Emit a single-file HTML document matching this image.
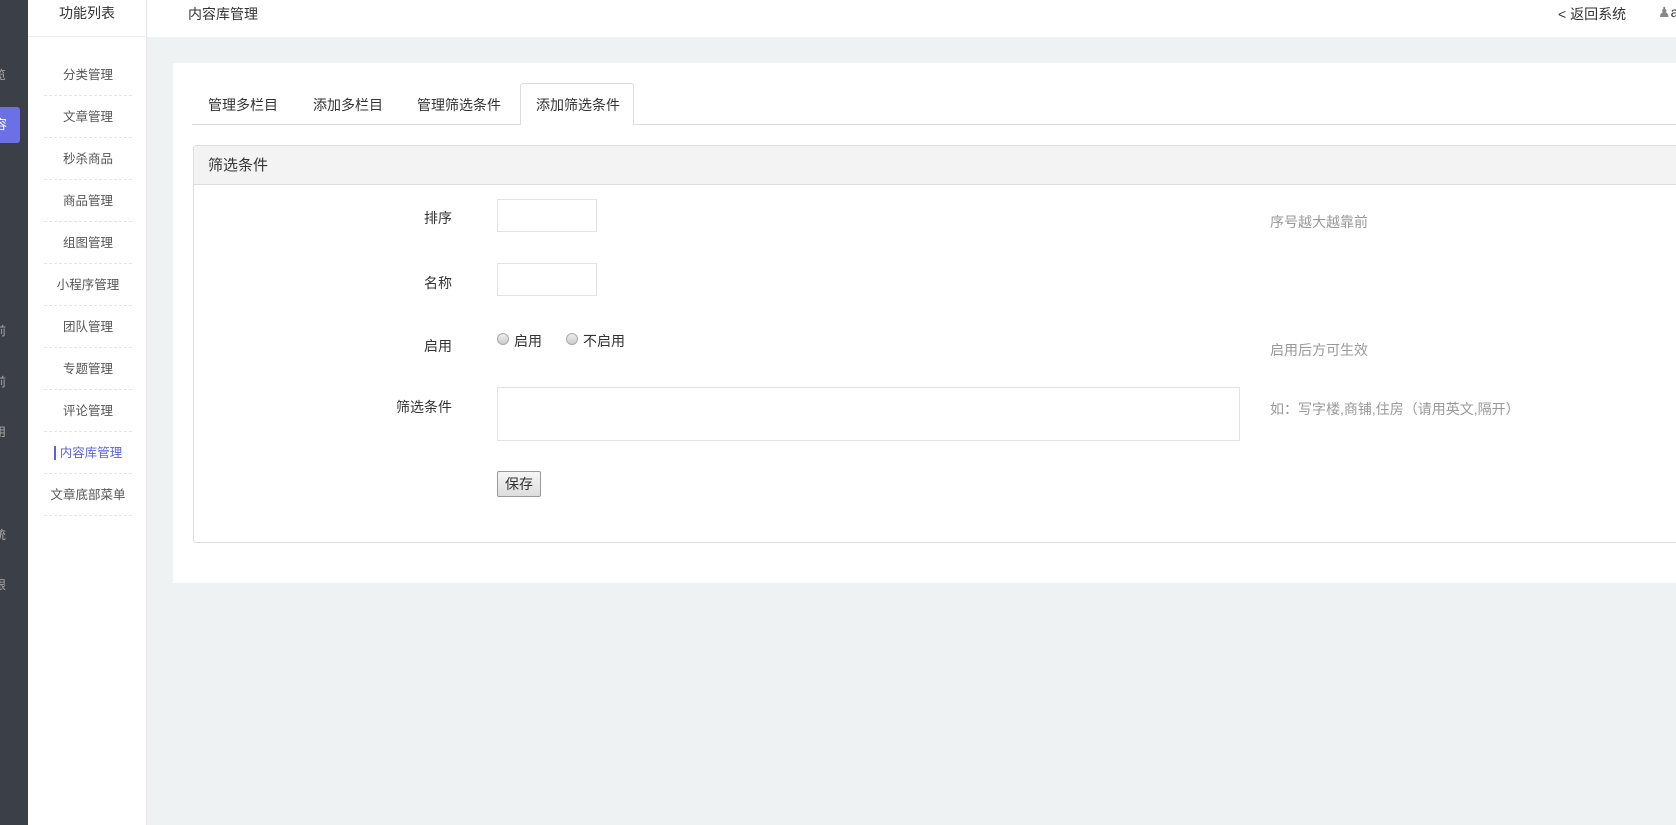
<!DOCTYPE html>
<html><head><meta charset="utf-8"><style>
*{box-sizing:border-box;margin:0;padding:0}
body{width:1676px;height:825px;overflow:hidden;background:#eff2f3;font-family:"Liberation Sans","Noto Sans CJK SC","Microsoft YaHei",sans-serif;font-size:14px;color:#333;position:relative}
.abs{position:absolute}
.dark{left:0;top:0;width:28px;height:825px;background:#3b3f48}
.side{left:28px;top:0;width:119px;height:825px;background:#fff;border-right:1px solid #e6e6e6}
.side .hd{height:37px;border-bottom:1px solid #eee;text-align:center;line-height:27px;font-size:14px;color:#333}
.side ul{list-style:none;margin:17px 14px 0 16px}
.side li{height:42px;line-height:42px;text-align:center;border-bottom:1px dashed #e5e5e5;font-size:12.5px;color:#555}
.top{left:147px;top:0;width:1529px;height:37px;background:#fff}
.panel{left:173px;top:63px;width:1503px;height:520px;background:#fff}
.tabline{left:192px;top:124px;width:1484px;border-top:1px solid #ddd}
.tab{top:84px;height:42px;line-height:42px;font-size:14px;color:#333}
.tabact{left:520px;top:83px;width:114px;height:42px;background:#fff;border:1px solid #ddd;border-bottom:none;border-radius:3px 3px 0 0}
.box{left:193px;top:145px;width:1490px;height:398px;border:1px solid #ddd;border-radius:3px}
.box .h{height:39px;background:#f3f3f3;border-bottom:1px solid #ddd;padding-left:14px;line-height:39px;font-size:15px;color:#333}
.lbl{width:100px;text-align:right;left:352px;font-size:14px;color:#333}
.inp{left:497px;width:100px;height:33px;border:1px solid #e3e3e3;background:#fff}
.help{left:1270px;color:#999;font-size:14px}
.radio{width:12px;height:12px;border-radius:50%;border:1px solid #aaa;background:linear-gradient(#eee,#ccc)}
</style></head><body>
<div class="abs dark">
 <div class="abs" style="left:0;top:107px;width:20px;height:36px;background:#6b70e4;border-radius:0 3px 3px 0;color:#fff;font-size:13px;line-height:36px;overflow:hidden;text-indent:-6px">容</div>
 <div class="abs" style="top:66px;left:-6px;color:#aaa;font-size:12px">览</div>
 <div class="abs" style="top:322px;left:-6px;color:#aaa;font-size:12px">前</div>
 <div class="abs" style="top:373px;left:-6px;color:#aaa;font-size:12px">前</div>
 <div class="abs" style="top:423px;left:-6px;color:#aaa;font-size:12px">用</div>
 <div class="abs" style="top:526px;left:-6px;color:#aaa;font-size:12px">统</div>
 <div class="abs" style="top:576px;left:-6px;color:#aaa;font-size:12px">限</div>
</div>
<div class="abs side">
 <div class="hd">功能列表</div>
 <ul>
  <li>分类管理</li><li>文章管理</li><li>秒杀商品</li><li>商品管理</li><li>组图管理</li><li>小程序管理</li><li>团队管理</li><li>专题管理</li><li>评论管理</li>
  <li style="color:#5c62d8"><span style="border-left:2px solid #5c62d8;padding-left:4px">内容库管理</span></li>
  <li>文章底部菜单</li>
 </ul>
</div>
<div class="abs top">
 <div class="abs" style="left:41px;top:4px">内容库管理</div>
 <div class="abs" style="left:1411px;top:4px;font-size:14px">&lt; 返回系统</div>
 <div class="abs" style="left:1511px;top:4px;color:#888">&#9823;<span style="color:#333">a</span></div>
</div>
<div class="abs panel"></div>
<div class="abs tabline"></div>
<div class="abs tabact"></div>
<div class="abs tab" style="left:208px">管理多栏目</div>
<div class="abs tab" style="left:313px">添加多栏目</div>
<div class="abs tab" style="left:417px">管理筛选条件</div>
<div class="abs tab" style="left:536px">添加筛选条件</div>
<div class="abs box"><div class="h">筛选条件</div></div>
<div class="abs lbl" style="top:208px">排序</div>
<div class="abs inp" style="top:199px"></div>
<div class="abs help" style="top:212px">序号越大越靠前</div>
<div class="abs lbl" style="top:273px">名称</div>
<div class="abs inp" style="top:263px"></div>
<div class="abs lbl" style="top:336px">启用</div>
<div class="abs radio" style="left:497px;top:333px"></div>
<div class="abs" style="left:514px;top:331px">启用</div>
<div class="abs radio" style="left:566px;top:333px"></div>
<div class="abs" style="left:583px;top:331px">不启用</div>
<div class="abs help" style="top:340px">启用后方可生效</div>
<div class="abs lbl" style="top:397px">筛选条件</div>
<div class="abs inp" style="top:387px;width:743px;height:54px"></div>
<div class="abs help" style="top:399px">如：写字楼,商铺,住房（请用英文,隔开）</div>
<div class="abs" style="left:497px;top:471px;width:44px;height:26px;border:1px solid #999;border-radius:2px;background:linear-gradient(#f6f6f6,#ddd);text-align:center;line-height:24px;font-size:14px">保存</div>
</body></html>
